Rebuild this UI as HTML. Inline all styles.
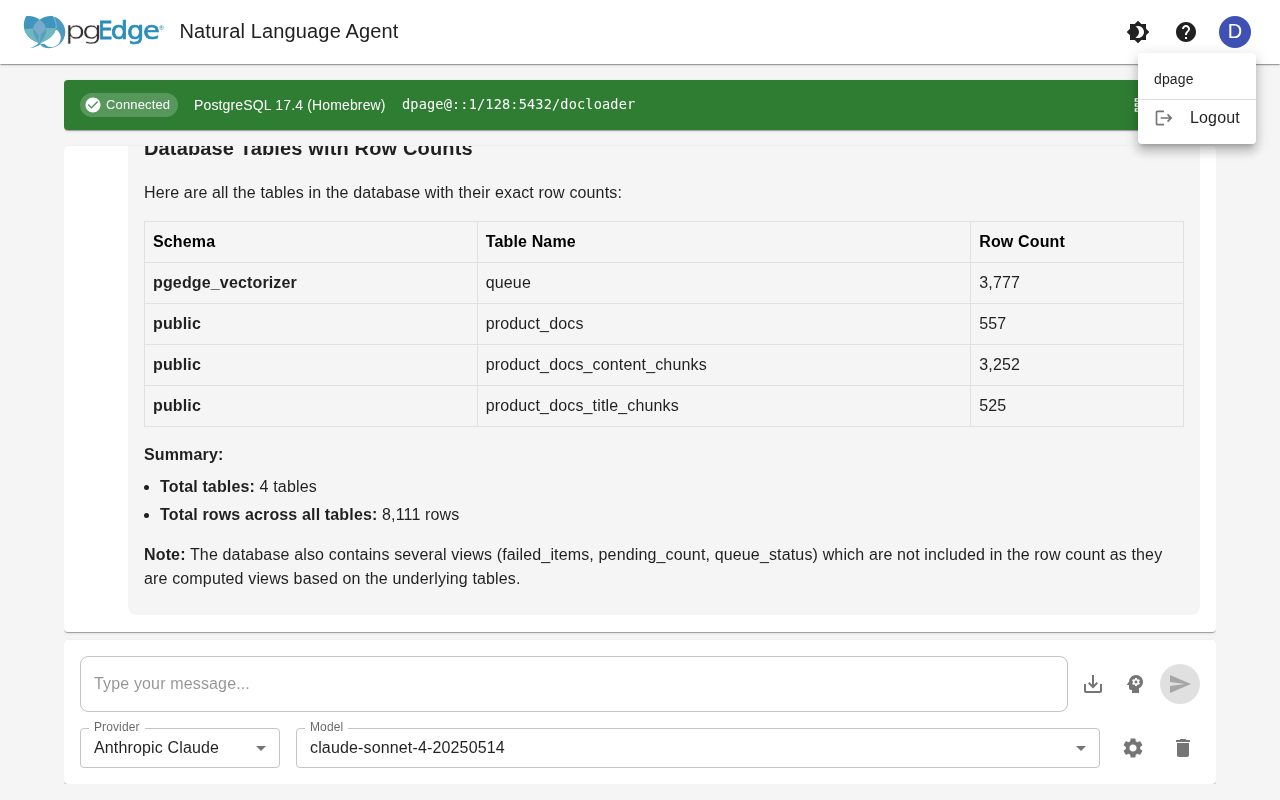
<!DOCTYPE html>
<html lang="en">
<head>
<meta charset="utf-8">
<title>pgEdge Natural Language Agent</title>
<style>
*{box-sizing:border-box;margin:0;padding:0}
html,body{width:1280px;height:800px;overflow:hidden}
body{background:#f5f5f5;font-family:"Liberation Sans",Arial,sans-serif;color:rgba(0,0,0,.87);position:relative;-webkit-font-smoothing:antialiased}
.abs{position:absolute}
body>*{will-change:transform}
svg{display:block}
/* app bar */
#appbar{left:0;top:0;width:1280px;height:64px;background:#fff;box-shadow:0 2px 1px -1px rgba(0,0,0,.2),0 1px 1px rgba(0,0,0,.14),0 1px 3px rgba(0,0,0,.12)}
#title{left:179.5px;top:19px;font-size:20px;line-height:24px;font-weight:400;color:#212121;white-space:nowrap;letter-spacing:.15px}
#avatar{left:1219px;top:16px;width:32px;height:32px;border-radius:50%;background:#3f51b5;color:#fff;font-size:20px;line-height:31px;text-align:center}
/* status bar */
#status{left:0;top:16px;width:1152px;height:50px;background:#2e7d32;border-radius:4px;box-shadow:0 2px 1px -1px rgba(0,0,0,.2),0 1px 1px rgba(0,0,0,.14),0 1px 3px rgba(0,0,0,.12)}
#chip{left:16px;top:13px;height:24px;width:98px;border-radius:12px;background:rgba(255,255,255,.2);color:#fff;font-size:13px;line-height:24px;letter-spacing:.15px}
#chip span{position:absolute;left:26px;top:0;white-space:nowrap}
#pgver{left:130px;top:16px;font-size:14px;line-height:18px;color:#fff;white-space:nowrap;letter-spacing:.15px}
#conn{left:338px;top:15px;font-family:"DejaVu Sans Mono","Liberation Mono",monospace;font-size:13.6px;line-height:18px;color:#fff;white-space:nowrap;letter-spacing:.15px}
/* chat paper */
#chat{left:0;top:82px;width:1152px;height:486px;background:#fff;border-radius:4px;box-shadow:0 2px 1px -1px rgba(0,0,0,.2),0 1px 1px rgba(0,0,0,.14),0 1px 3px rgba(0,0,0,.12);overflow:hidden}
#bubble{left:64px;top:-40px;width:1072px;height:509px;background:#f5f5f5;border-radius:8px}
#bubble h2{position:absolute;left:16px;top:30px;font-size:20px;line-height:24px;font-weight:700;white-space:nowrap;letter-spacing:.15px}
.p{position:absolute;left:16px;font-size:16px;line-height:24px;white-space:nowrap;letter-spacing:.15px}
table{position:absolute;left:16px;top:115px;width:1040px;border-collapse:collapse;font-size:16px;letter-spacing:.15px}
td,th{border:1px solid #e0e0e0;height:41px;padding:0 8px;text-align:left;vertical-align:middle;line-height:24px}
th{font-weight:700;color:#000}
td b{font-weight:700}
/* input paper */
#inp{left:0;top:576px;width:1152px;height:144px;background:#fff;border-radius:4px;box-shadow:0 2px 1px -1px rgba(0,0,0,.2),0 1px 1px rgba(0,0,0,.14),0 1px 3px rgba(0,0,0,.12)}
.field{position:absolute;border:1px solid #c4c4c4;border-radius:4px}
.lbl{position:absolute;top:-9px;left:8px;padding:0 5px;background:#fff;font-size:12px;line-height:14px;color:rgba(0,0,0,.6);letter-spacing:.11px}
.val{position:absolute;left:13px;top:7px;font-size:16px;line-height:23px;white-space:nowrap;letter-spacing:.15px}
/* menu */
#menu{left:1138px;top:53px;width:118px;height:91px;background:#fff;border-radius:4px;box-shadow:0 5px 5px -3px rgba(0,0,0,.2),0 8px 10px 1px rgba(0,0,0,.14),0 3px 14px 2px rgba(0,0,0,.12)}
</style>
</head>
<body>
<!-- APP BAR -->
<div id="appbar" class="abs">
  <svg id="logo" class="abs" style="left:18px;top:8px" width="152" height="50" viewBox="0 0 152 50">
    <defs>
      <clipPath id="cpU"><path d="M130,130 C95,190 85,270 100,330 C115,440 230,525 345,565 C430,480 470,380 450,310 C435,260 395,215 345,188 C300,140 200,118 130,130 Z"/><path d="M560,130 C600,190 622,265 607,330 C590,430 470,520 345,565 C262,480 225,380 242,310 C255,260 295,215 345,188 C400,142 490,120 560,130 Z"/></clipPath>
      <clipPath id="cpL"><path d="M130,130 C95,190 85,270 100,330 C115,440 230,525 345,565 C430,480 470,380 450,310 C435,260 395,215 345,188 C300,140 200,118 130,130 Z"/></clipPath>
      <clipPath id="cpR"><path d="M560,130 C600,190 622,265 607,330 C590,430 470,520 345,565 C262,480 225,380 242,310 C255,260 295,215 345,188 C400,142 490,120 560,130 Z"/></clipPath>
    </defs>
    <g transform="scale(0.0625)">
      <path fill="#4d9ac0" fill-rule="evenodd" d="M500,128 A257,257 0 1 1 400,622 C380,610 360,590 345,565 C365,575 390,580 420,572 A150,150 0 1 0 535,325 L500,128 Z"/>
      <path fill="#4d9ac0" d="M335,552 C300,600 250,628 195,634 C250,640 320,615 368,572 Z"/>
      <path fill="#3e96bd" d="M130,130 C95,190 85,270 100,330 C115,440 230,525 345,565 C430,480 470,380 450,310 C435,260 395,215 345,188 C300,140 200,118 130,130 Z"/>
      <path fill="#3e96bd" d="M560,130 C600,190 622,265 607,330 C590,430 470,520 345,565 C262,480 225,380 242,310 C255,260 295,215 345,188 C400,142 490,120 560,130 Z"/>
      <g clip-path="url(#cpU)"><path fill="#6fb8c0" d="M0,352 Q345,300 700,328 L700,700 L0,700 Z"/></g>
      <g clip-path="url(#cpL)"><g clip-path="url(#cpR)"><path fill="#5a9fb9" d="M0,352 Q345,300 700,328 L700,700 L0,700 Z"/></g></g>
      <path fill="#77aacb" d="M345,188 C296,222 243,268 246,320 C249,372 318,392 327,440 C331,480 335,520 345,552 C355,520 359,480 363,440 C372,392 441,372 444,320 C447,268 394,222 345,188 Z"/>
      <path fill="none" stroke="#fff" stroke-opacity=".75" stroke-width="7" d="M566,140 C600,195 618,260 608,325"/>
    </g>
    <text transform="translate(47.1,30.8) scale(1.27,1)" letter-spacing="-2.75" font-family="DejaVu Sans, Liberation Sans, sans-serif" font-size="25.3" fill="#333" stroke="#fff" stroke-width=".45">pg</text>
    <text transform="translate(80.2,30.8) scale(.89,1)" font-family="DejaVu Sans, Liberation Sans, sans-serif" font-size="25.5" fill="#2a8dbb" stroke="#2a8dbb" stroke-width=".8">E</text>
    <text transform="translate(92.8,30.8) scale(1.07,1)" letter-spacing="-1.1" font-family="DejaVu Sans, Liberation Sans, sans-serif" font-size="25.5" fill="#2a8dbb" stroke="#2a8dbb" stroke-width=".7">dge</text>
    <text x="141.2" y="21.7" font-family="Liberation Sans, Arial, sans-serif" font-size="6" font-weight="700" fill="#2a8dbb">®</text>
  </svg>
  <div id="title" class="abs">Natural Language Agent</div>
  <svg class="abs" style="left:1126px;top:20px" width="24" height="24" viewBox="0 0 24 24"><path fill="#212121" d="M20 8.69V4h-4.690L12 .69 8.690 4H4v4.690L.69 12 4 15.310V20h4.690L12 23.310 15.310 20H20v-4.690L23.310 12 20 8.690zM12 18c-.89 0-1.740-.2-2.500-.55C11.560 16.500 13 14.420 13 12s-1.440-4.500-3.500-5.450C10.260 6.200 11.110 6 12 6c3.310 0 6 2.690 6 6s-2.690 6-6 6z"/></svg>
  <svg class="abs" style="left:1174px;top:20px" width="24" height="24" viewBox="0 0 24 24"><path fill="#212121" d="M12 2C6.480 2 2 6.480 2 12s4.480 10 10 10 10-4.480 10-10S17.520 2 12 2zm1 17h-2v-2h2v2zm2.070-7.750-.9.920C13.450 12.900 13 13.500 13 15h-2v-.5c0-1.100.45-2.100 1.170-2.830l1.240-1.260c.37-.36.590-.86.590-1.410 0-1.100-.9-2-2-2s-2 .9-2 2H8c0-2.210 1.790-4 4-4s4 1.790 4 4c0 .88-.36 1.680-.93 2.250z"/></svg>
  <div id="avatar" class="abs">D</div>
</div>

<div id="main" class="abs" style="left:64px;top:64px;width:1152px;height:720px;overflow:hidden">
<!-- STATUS BAR -->
<div id="status" class="abs">
  <div id="chip" class="abs">
    <svg class="abs" style="left:4px;top:3px" width="18" height="18" viewBox="0 0 24 24"><path fill="#fff" d="M12 2C6.480 2 2 6.480 2 12s4.480 10 10 10 10-4.480 10-10S17.520 2 12 2zm-2 15-5-5 1.410-1.410L10 14.170l7.590-7.590L19 8l-9 9z"/></svg>
    <span>Connected</span>
  </div>
  <div id="pgver" class="abs">PostgreSQL 17.4 (Homebrew)</div>
  <div id="conn" class="abs">dpage@::1/128:5432/docloader</div>
  <svg class="abs" style="left:1069px;top:15px" width="20" height="20" viewBox="0 0 24 24"><path fill="#fff" d="M2 20h20v-4H2v4zm2-3h2v2H4v-2zM2 4v4h20V4H2zm4 3H4V5h2v2zm-4 7h20v-4H2v4zm2-3h2v2H4v-2z"/></svg>
</div>

<!-- CHAT PAPER -->
<div id="chat" class="abs">
  <div id="bubble" class="abs">
    <h2>Database Tables with Row Counts</h2>
    <div class="p" style="top:75px">Here are all the tables in the database with their exact row counts:</div>
    <table>
      <colgroup><col style="width:333px"><col style="width:494px"><col style="width:213px"></colgroup>
      <tr><th>Schema</th><th>Table Name</th><th>Row Count</th></tr>
      <tr><td><b>pgedge_vectorizer</b></td><td>queue</td><td>3,777</td></tr>
      <tr><td><b>public</b></td><td>product_docs</td><td>557</td></tr>
      <tr><td><b>public</b></td><td>product_docs_content_chunks</td><td>3,252</td></tr>
      <tr><td><b>public</b></td><td>product_docs_title_chunks</td><td>525</td></tr>
    </table>
    <div class="p" style="top:337px"><b>Summary:</b></div>
    <ul class="p" style="top:367px;left:16px;padding-left:16px;line-height:28px"><li><b>Total tables:</b> 4 tables</li><li><b>Total rows across all tables:</b> 8,111 rows</li></ul>
    <div class="p" style="top:437px"><b>Note:</b> The database also contains several views (failed_items, pending_count, queue_status) which are not included in the row count as they</div>
    <div class="p" style="top:461px">are computed views based on the underlying tables.</div>
  </div>
</div>

<!-- INPUT PAPER -->
<div id="inp" class="abs">
  <div class="field" style="left:16px;top:16px;width:988px;height:56px;border-radius:8px">
    <div class="val" style="top:15px;left:13px;color:rgba(0,0,0,.42)">Type your message...</div>
  </div>
  <svg class="abs" style="left:1017px;top:32px" width="24" height="24" viewBox="0 0 24 24"><path fill="#757575" d="M19 12v7H5v-7H3v7c0 1.100.9 2 2 2h14c1.100 0 2-.9 2-2v-7h-2zm-6 .67 2.590-2.580L17 11.500l-5 5-5-5 1.410-1.410L11 12.670V3h2v9.670z"/></svg>
  <svg class="abs" style="left:1059px;top:32px" width="24" height="24" viewBox="0 0 24 24"><path fill="#757575" d="M13 8.570c-.79 0-1.430.64-1.430 1.430s.64 1.430 1.430 1.430 1.430-.64 1.430-1.430-.64-1.430-1.430-1.430z"/><path fill="#757575" d="M13 3C9.250 3 6.200 5.940 6.020 9.640L4.100 12.200c-.25.330-.01.8.4.8H6v3c0 1.100.9 2 2 2h1v3h7v-4.680c2.360-1.120 4-3.530 4-6.320 0-3.870-3.130-7-7-7zm3 7c0 .13-.01.26-.02.39l.83.66c.08.06.1.16.05.25l-.8 1.390c-.05.09-.16.12-.24.09l-.99-.4c-.21.16-.43.290-.67.390L14 13.830c-.01.1-.1.170-.2.170h-1.600c-.1 0-.18-.07-.2-.17l-.15-1.060c-.25-.1-.47-.23-.68-.39l-.99.4c-.09.030-.2 0-.25-.09l-.8-1.390c-.05-.08-.03-.19.050-.25l.84-.66c-.01-.13-.02-.26-.02-.39s.02-.27.040-.39l-.85-.66c-.08-.06-.1-.16-.05-.26l.8-1.380c.05-.09.15-.12.240-.09l1 .4c.2-.15.430-.29.670-.39L12 6.170c.02-.1.1-.17.2-.17h1.600c.1 0 .18.070.2.170l.15 1.060c.24.1.46.230.67.390l1-.4c.09-.03.2 0 .24.090l.8 1.380c.05.090.03.2-.05.260l-.85.660c.03.120.04.250.04.390z"/></svg>
  <div class="abs" style="left:1096px;top:24px;width:40px;height:40px;border-radius:50%;background:#e0e0e0">
    <svg class="abs" style="left:8px;top:8px" width="24" height="24" viewBox="0 0 24 24"><path fill="#a6a6a6" d="M2.010 21 23 12 2.010 3 2 10l15 2-15 2z"/></svg>
  </div>
  <div class="field" style="left:16px;top:88px;width:200px;height:40px">
    <div class="lbl">Provider</div>
    <div class="val">Anthropic Claude</div>
    <svg class="abs" style="left:168px;top:7px" width="24" height="24" viewBox="0 0 24 24"><path fill="#757575" d="m7 10 5 5 5-5z"/></svg>
  </div>
  <div class="field" style="left:232px;top:88px;width:804px;height:40px">
    <div class="lbl">Model</div>
    <div class="val">claude-sonnet-4-20250514</div>
    <svg class="abs" style="left:772px;top:7px" width="24" height="24" viewBox="0 0 24 24"><path fill="#757575" d="m7 10 5 5 5-5z"/></svg>
  </div>
  <svg class="abs" style="left:1057px;top:96px" width="24" height="24" viewBox="0 0 24 24"><path fill="#757575" d="M19.140 12.940c.04-.3.060-.61.060-.94 0-.32-.02-.64-.07-.94l2.030-1.580c.18-.14.230-.41.120-.61l-1.920-3.320c-.12-.22-.37-.29-.59-.22l-2.390.96c-.5-.38-1.030-.7-1.620-.94l-.36-2.540c-.04-.24-.24-.41-.48-.41h-3.840c-.24 0-.43.170-.47.410l-.36 2.540c-.59.240-1.130.57-1.620.94l-2.390-.96c-.22-.08-.47 0-.59.220L2.740 8.870c-.12.210-.08.470.12.610l2.030 1.580c-.05.3-.09.630-.09.940s.02.640.07.940l-2.030 1.580c-.18.140-.23.410-.12.610l1.920 3.320c.12.220.37.290.59.220l2.390-.96c.5.380 1.030.7 1.620.94l.36 2.540c.05.240.24.410.48.410h3.840c.24 0 .44-.17.470-.41l.36-2.540c.59-.24 1.130-.56 1.620-.94l2.390.96c.22.080.47 0 .59-.22l1.920-3.320c.12-.22.070-.47-.12-.61l-2.010-1.580zM12 15.600c-1.980 0-3.600-1.620-3.600-3.600s1.620-3.600 3.600-3.600 3.600 1.620 3.600 3.600-1.620 3.600-3.600 3.600z"/></svg>
  <svg class="abs" style="left:1107px;top:96px" width="24" height="24" viewBox="0 0 24 24"><path fill="#757575" d="M6 19c0 1.100.9 2 2 2h8c1.100 0 2-.9 2-2V7H6v12zM19 4h-3.500l-1-1h-5l-1 1H5v2h14V4z"/></svg>
</div>

</div>
<!-- USER MENU -->
<div id="menu" class="abs">
  <div class="abs" style="left:16px;top:17px;font-size:14px;line-height:18px;color:rgba(0,0,0,.87);letter-spacing:.15px">dpage</div>
  <div class="abs" style="left:0;top:46px;width:118px;height:1px;background:#e0e0e0"></div>
  <svg class="abs" style="left:16px;top:55px" width="20" height="20" viewBox="0 0 24 24"><path fill="#757575" d="m17 7-1.410 1.410L18.170 11H8v2h10.170l-2.580 2.580L17 17l5-5zM4 5h8V3H4c-1.100 0-2 .9-2 2v14c0 1.100.9 2 2 2h8v-2H4V5z"/></svg>
  <div class="abs" style="left:52px;top:53px;font-size:16px;line-height:24px;color:rgba(0,0,0,.87);letter-spacing:.15px">Logout</div>
</div>
</body>
</html>
